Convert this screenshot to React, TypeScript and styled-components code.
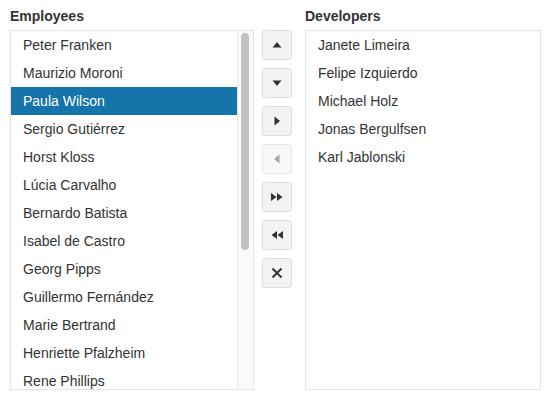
import React, { useState } from 'react'
import styled, { createGlobalStyle } from 'styled-components'

const GlobalStyle = createGlobalStyle`
  html, body {
    margin: 0;
    padding: 0;
    background: #ffffff;
  }
  body {
    font-family: "Liberation Sans", Arial, sans-serif;
    color: #333333;
  }
`

const Page = styled.div`
  display: flex;
  align-items: flex-start;
  padding: 6px 10px 0 10px;
`

const Column = styled.div<{ $width: number }>`
  display: flex;
  flex-direction: column;
  width: ${({ $width }) => $width}px;
`

const Heading = styled.div`
  font-size: 14px;
  font-weight: bold;
  line-height: 20px;
  height: 20px;
  margin-bottom: 4px;
  color: #333333;
`

const ListFrame = styled.div`
  display: flex;
  height: 358px;
  border: 1px solid #e4e4e4;
  background: #ffffff;
  overflow: hidden;
`

const ListBox = styled.ul`
  flex: 1;
  min-width: 0;
  list-style: none;
  margin: 0;
  padding: 0;
  overflow-y: auto;
  scrollbar-width: none;
`

const ScrollTrack = styled.div`
  box-sizing: border-box;
  flex: 0 0 16px;
  display: flex;
  flex-direction: column;
  padding: 2px 4px 0 3px;
  background: #fafafa;
  border-left: 1px solid #e8e8e8;
`

const ScrollThumb = styled.div`
  width: 8px;
  border-radius: 4px;
  background: #c1c1c1;
`

const Item = styled.li<{ $selected?: boolean }>`
  height: 28px;
  line-height: 28px;
  padding: 0 12px;
  font-size: 14px;
  white-space: nowrap;
  overflow: hidden;
  cursor: default;
  color: ${({ $selected }) => ($selected ? '#ffffff' : '#333333')};
  background: ${({ $selected }) => ($selected ? '#1574aa' : 'transparent')};
`

const Toolbar = styled.div`
  display: flex;
  flex-direction: column;
  gap: 8px;
  margin: 24px 13px 0 8px;
`

const ToolButton = styled.button`
  width: 30px;
  height: 30px;
  padding: 0;
  display: flex;
  align-items: center;
  justify-content: center;
  border: 1px solid #dddddd;
  border-radius: 3px;
  background: #f3f3f3;
  color: #333333;
  cursor: pointer;

  &:disabled {
    background: #f8f8f8;
    border-color: #e8e8e8;
    color: #a8a8a8;
    cursor: default;
  }
`

type IconKind = 'up' | 'down' | 'right' | 'left' | 'allRight' | 'allLeft' | 'clear'

const Icon = ({ kind }: { kind: IconKind }) => {
  switch (kind) {
    case 'up':
      return (
        <svg width="12" height="12" viewBox="0 0 12 12">
          <path d="M1.5 8.5 L6 3 L10.5 8.5 Z" fill="currentColor" />
        </svg>
      )
    case 'down':
      return (
        <svg width="12" height="12" viewBox="0 0 12 12">
          <path d="M1.5 3.5 L6 9 L10.5 3.5 Z" fill="currentColor" />
        </svg>
      )
    case 'right':
      return (
        <svg width="12" height="12" viewBox="0 0 12 12">
          <path d="M3.5 1.5 L9 6 L3.5 10.5 Z" fill="currentColor" />
        </svg>
      )
    case 'left':
      return (
        <svg width="12" height="12" viewBox="0 0 12 12">
          <path d="M8.5 1.5 L3 6 L8.5 10.5 Z" fill="currentColor" />
        </svg>
      )
    case 'allRight':
      return (
        <svg width="14" height="12" viewBox="0 0 14 12">
          <path d="M1 2 L6.5 6 L1 10 Z M7 2 L12.5 6 L7 10 Z" fill="currentColor" />
        </svg>
      )
    case 'allLeft':
      return (
        <svg width="14" height="12" viewBox="0 0 14 12">
          <path d="M7 2 L1.5 6 L7 10 Z M13 2 L7.5 6 L13 10 Z" fill="currentColor" />
        </svg>
      )
    default:
      return (
        <svg width="12" height="12" viewBox="0 0 12 12">
          <path d="M1.5 1.5 L10.5 10.5 M10.5 1.5 L1.5 10.5" stroke="currentColor" strokeWidth="2" />
        </svg>
      )
  }
}

const employees = [
  'Peter Franken',
  'Maurizio Moroni',
  'Paula Wilson',
  'Sergio Gutiérrez',
  'Horst Kloss',
  'Lúcia Carvalho',
  'Bernardo Batista',
  'Isabel de Castro',
  'Georg Pipps',
  'Guillermo Fernández',
  'Marie Bertrand',
  'Henriette Pfalzheim',
  'Rene Phillips',
  'Carlos Hernández',
  'Yoshi Latimer',
  'Patricia McKenna',
  'Helen Bennett',
  'Philip Cramer',
  'Daniel Tonini',
  'Annette Roulet',
  'Yoshi Tannamuri',
]

const developers = [
  'Janete Limeira',
  'Felipe Izquierdo',
  'Michael Holz',
  'Jonas Bergulfsen',
  'Karl Jablonski',
]

const tools: { kind: IconKind; label: string; disabled?: boolean }[] = [
  { kind: 'up', label: 'Move up' },
  { kind: 'down', label: 'Move down' },
  { kind: 'right', label: 'Transfer to' },
  { kind: 'left', label: 'Transfer from', disabled: true },
  { kind: 'allRight', label: 'Transfer all to' },
  { kind: 'allLeft', label: 'Transfer all from' },
  { kind: 'clear', label: 'Remove' },
]

const VISIBLE_HEIGHT = 358
const ROW_HEIGHT = 28

const App = () => {
  const [selected, setSelected] = useState('Paula Wilson')
  const thumbHeight = Math.round(((VISIBLE_HEIGHT - 2) * VISIBLE_HEIGHT) / (employees.length * ROW_HEIGHT))

  return (
    <>
      <GlobalStyle />
      <Page>
        <Column $width={244}>
          <Heading>Employees</Heading>
          <ListFrame>
            <ListBox>
              {employees.map((name) => (
                <Item key={name} $selected={name === selected} onClick={() => setSelected(name)}>
                  {name}
                </Item>
              ))}
            </ListBox>
            <ScrollTrack>
              <ScrollThumb style={{ height: thumbHeight }} />
            </ScrollTrack>
          </ListFrame>
        </Column>
        <Toolbar>
          {tools.map((tool) => (
            <ToolButton key={tool.kind} title={tool.label} disabled={tool.disabled}>
              <Icon kind={tool.kind} />
            </ToolButton>
          ))}
        </Toolbar>
        <Column $width={236}>
          <Heading>Developers</Heading>
          <ListFrame>
            <ListBox>
              {developers.map((name) => (
                <Item key={name}>{name}</Item>
              ))}
            </ListBox>
          </ListFrame>
        </Column>
      </Page>
    </>
  )
}

export default App
